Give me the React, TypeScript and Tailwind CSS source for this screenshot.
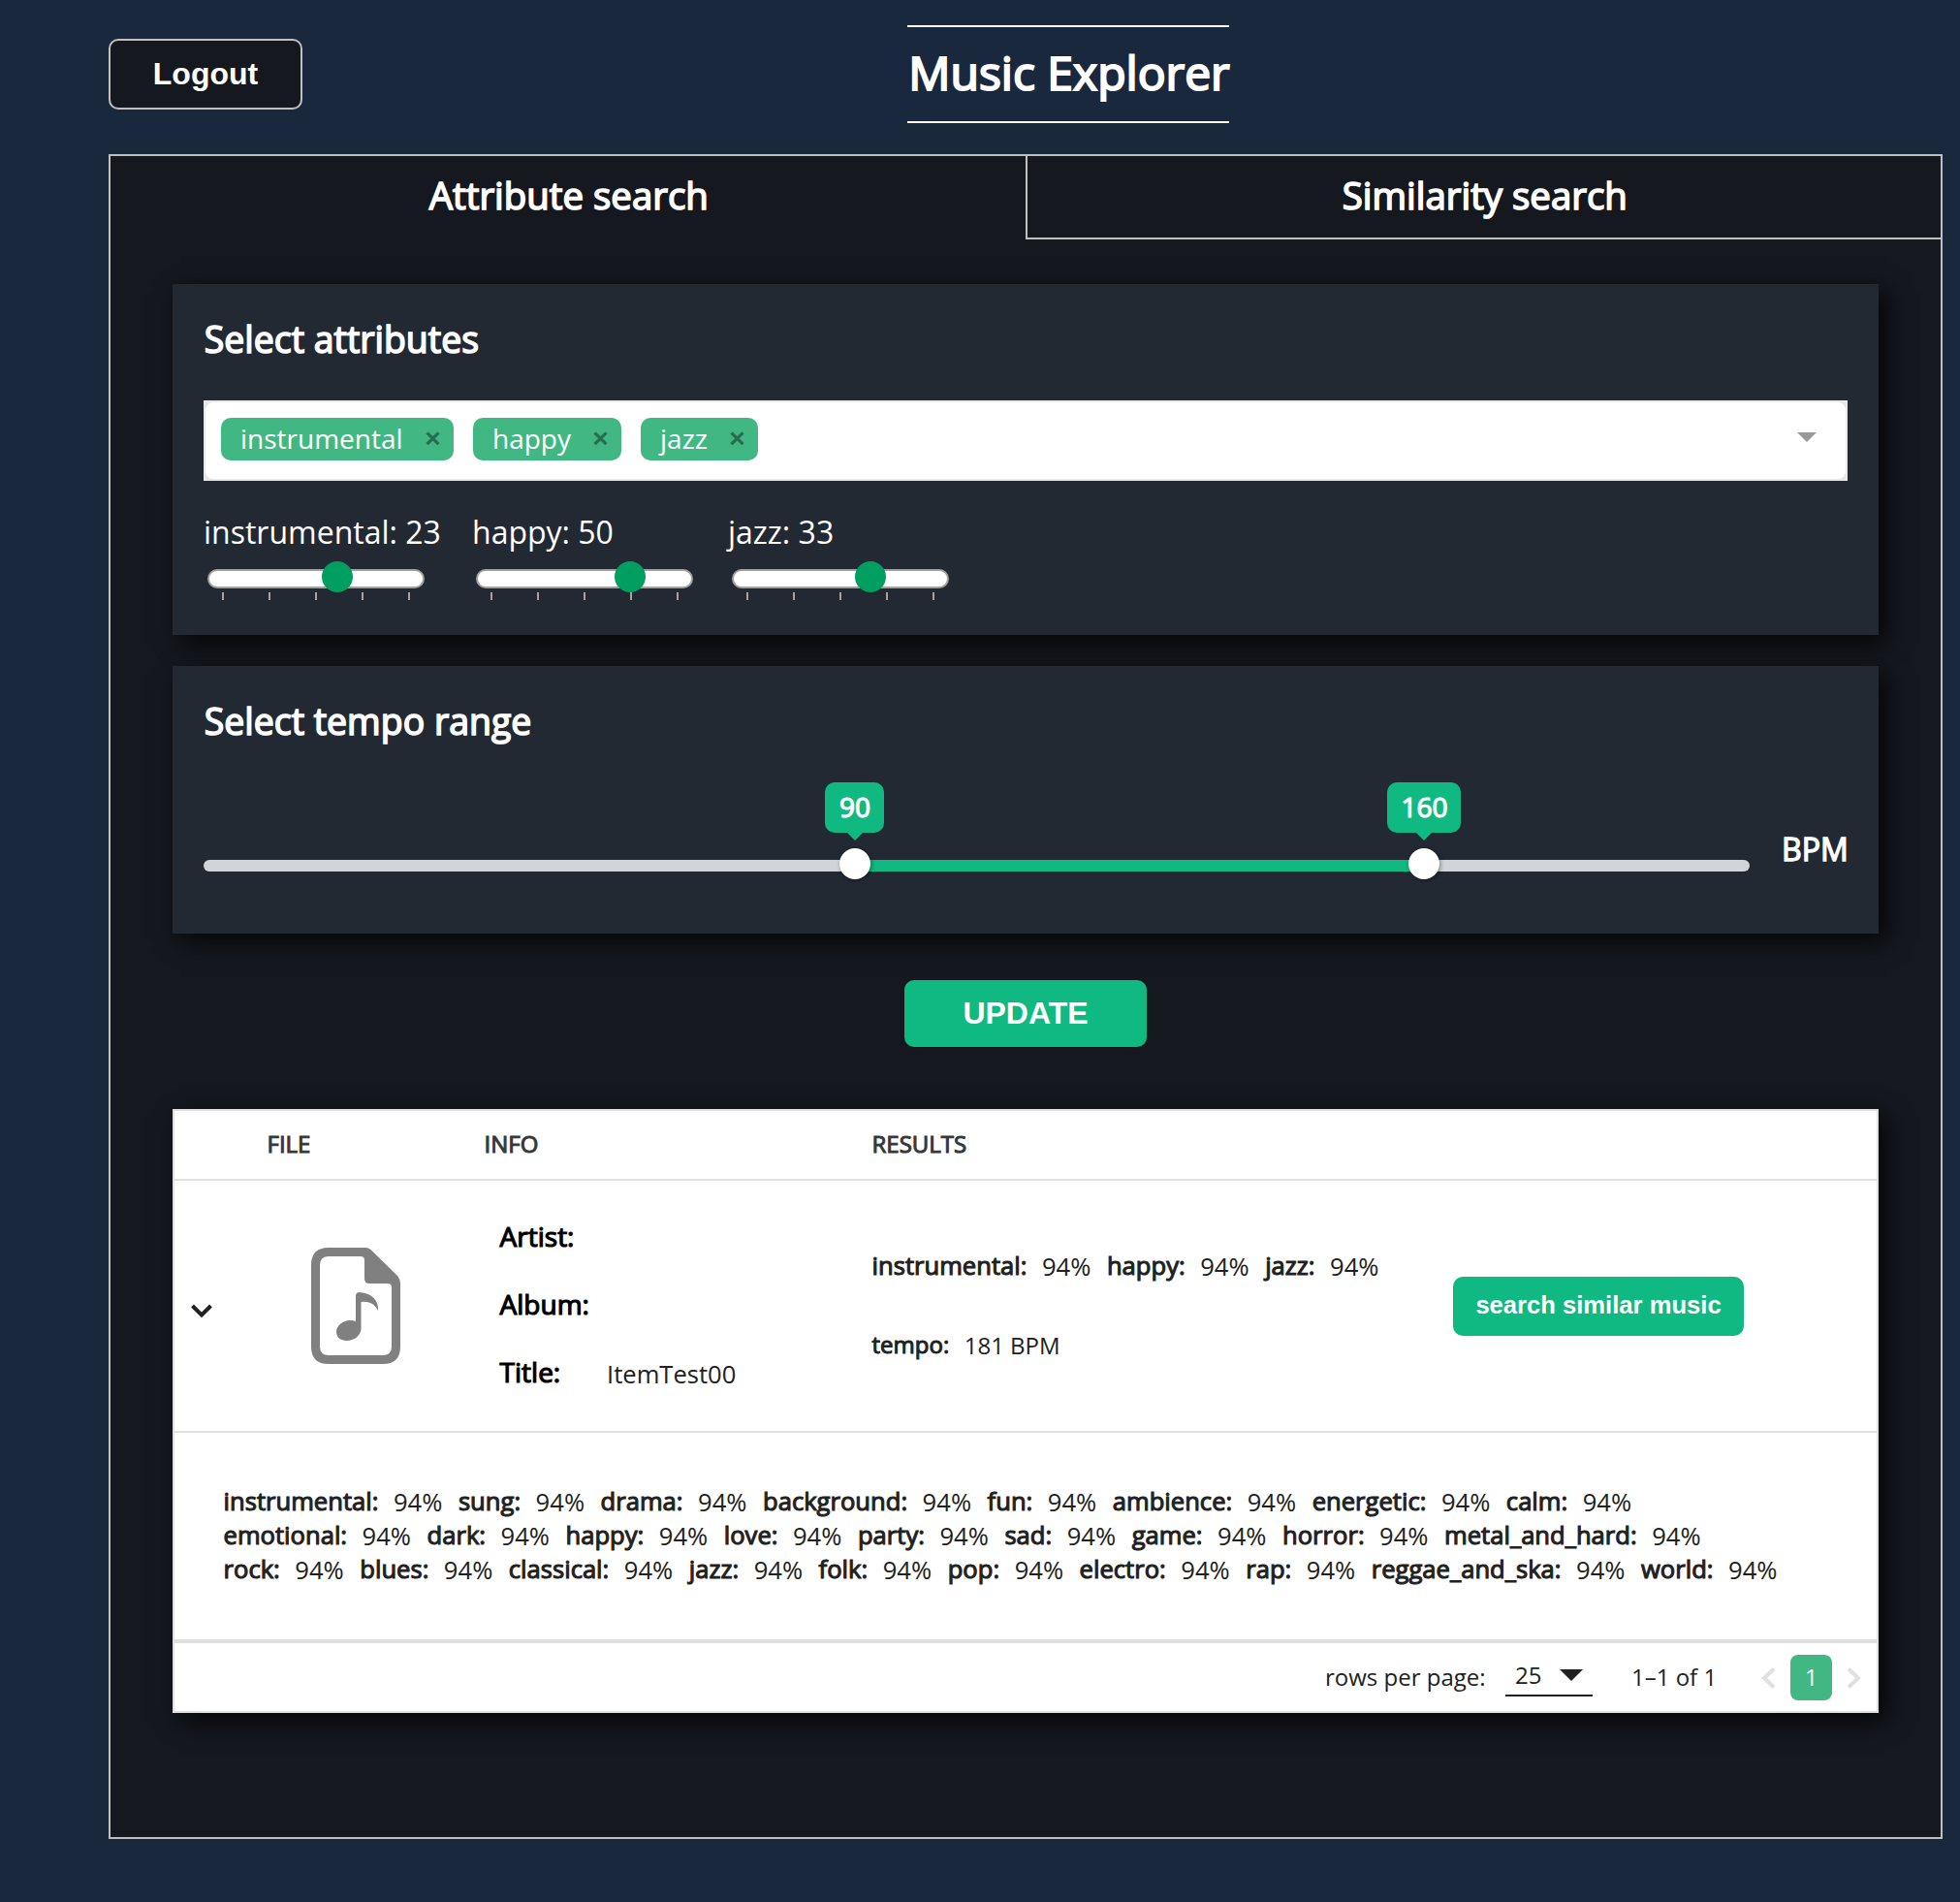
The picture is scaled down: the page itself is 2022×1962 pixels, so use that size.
import React from 'react'

// Regular letterforms thickened with a stroke, nudged so they grow up and to the right.
function Heavy({ children, className = '' }: { children: React.ReactNode; className?: string }) {
  return (
    <span className={`inline-block [-webkit-text-stroke:0.042em_currentColor] [translate:0.021em_-0.021em] ${className}`}>
      {children}
    </span>
  )
}

const attributes = [
  { name: 'instrumental', value: 23, offset: 'left-[118px]', width: 'w-[245px]', chip: 'w-[240px]' },
  { name: 'happy', value: 50, offset: 'left-[143px]', width: 'w-[232px]', chip: 'w-[153px]' },
  { name: 'jazz', value: 33, offset: 'left-[127px]', width: 'w-[232px]', chip: 'w-[121px]' },
]

const details = [
  ['instrumental', 'sung', 'drama', 'background', 'fun', 'ambience', 'energetic', 'calm'],
  ['emotional', 'dark', 'happy', 'love', 'party', 'sad', 'game', 'horror', 'metal_and_hard'],
  ['rock', 'blues', 'classical', 'jazz', 'folk', 'pop', 'electro', 'rap', 'reggae_and_ska', 'world'],
]

function Score({ name, value = '94%' }: { name: string; value?: string }) {
  return (
    <span className="flex gap-4 whitespace-pre">
      <Heavy>{name}:</Heavy>
      <span>{value}</span>
    </span>
  )
}

function Slider({ name, value, offset, width }: { name: string; value: number; offset: string; width: string }) {
  return (
    <div className={`${width}`}>
      <div className="h-[44px] text-[32px] leading-[44px] whitespace-nowrap">
        {name}: {value}
      </div>
      <div className="relative mx-1 mt-[16px] h-5 w-[224px] rounded-[10px] border-2 border-[#a0a0a0] bg-white">
        <div className={`absolute -top-[10px] size-8 rounded-full bg-[#009e60] ${offset} -ml-[2px]`} />
      </div>
      <div className="mt-1 ml-[19px] flex gap-[46px]">
        {[0, 1, 2, 3, 4].map((i) => (
          <div key={i} className="h-2 w-0.5 bg-[#b0a0a2]" />
        ))}
      </div>
    </div>
  )
}

function Handle({ value, place }: { value: number; place: string }) {
  return (
    <div className={`absolute -top-[12px] flex size-8 justify-center rounded-full bg-white shadow-[1px_1px_4px_rgba(0,0,0,0.45)] ${place}`}>
      <div className="absolute -top-[68px] flex h-[52px] items-center rounded-[10px] bg-[#10b981] px-[14px] pb-px text-[28px] leading-[42px] text-white">
        <Heavy>{value}</Heavy>
        <div className="absolute top-[50px] left-1/2 -ml-[10px] border-x-[10px] border-t-[10px] border-x-transparent border-t-[#10b981]" />
      </div>
    </div>
  )
}

function FileIcon() {
  return (
    <svg width="92" height="120" viewBox="0 0 92 120" fill="#808080">
      <path
        fillRule="evenodd"
        d="M18 0H56Q60 0 63 3.500L89 29Q92 32.500 92 37V102Q92 120 74 120H18Q0 120 0 102V18Q0 0 18 0ZM18 9Q9 9 9 18V102Q9 111 18 111H74Q83 111 83 102V41Q83 37 79 37H60Q55 37 55 32V13Q55 9 51 9Z"
      />
      <path d="M46 50Q46 46 50 46C62 47 70 54 69 65C66 59 61 55 51.500 56V84C51 91 44 96 37 96C30 96 26 92 26 87C26 80 33 75 40 75Q44 75 46 76Z" />
    </svg>
  )
}

export default function App() {
  return (
    <div className="h-[1962px] w-[2022px] overflow-hidden bg-[#1a283e] pl-[112px] font-['Open_Sans','Noto_Sans',sans-serif] text-white">
      <header className="flex h-[159px] items-start">
        <button className="mt-[40px] h-[73px] w-[200px] rounded-[10px] border-2 border-[#c0c0c0] bg-[#15181f] pb-[2px] font-['Liberation_Sans',Arial,sans-serif] text-[32px] font-bold">
          Logout
        </button>
        <h1 className="mt-[26px] ml-[624px] h-[101px] w-[332px] border-y-2 border-white text-center text-[48px] leading-[96px] whitespace-nowrap">
          <Heavy>Music Explorer</Heavy>
        </h1>
      </header>

      <main className="h-[1738px] w-[1892px] border-2 border-[#c0c0c0] bg-[#15181f]">
        <nav className="grid h-[86px] grid-cols-2 text-center text-[38.400px] leading-[83px]">
          <div>
            <Heavy>Attribute search</Heavy>
          </div>
          <div className="border-b-2 border-l-2 border-[#c0c0c0]">
            <Heavy>Similarity search</Heavy>
          </div>
        </nav>

        <div className="px-16 pt-[46px]">
          <section className="h-[362px] bg-[#232933] px-8 pt-8 shadow-[8px_8px_24px_rgba(0,0,0,0.8)]">
            <h3 className="h-[52px] text-[37.440px] leading-[52px]">
              <Heavy>Select attributes</Heavy>
            </h3>
            <div className="mt-9 h-[83px] bg-[#e8e8e8]">
              <div className="flex h-full items-start justify-between rounded-[10px] border-2 border-[#e8e8e8] bg-white">
                <div className="flex gap-5 pt-4 pl-4">
                  {attributes.map((a) => (
                    <div key={a.name} className={`flex h-11 justify-between rounded-[10px] bg-[#41b883] pl-5 text-[28px] leading-[42px] ${a.chip}`}>
                      <span>{a.name}</span>
                      <Heavy className="w-11 text-center text-[#266d4d]">×</Heavy>
                    </div>
                  ))}
                </div>
                <div className="mt-[31px] mr-[30px] border-x-[10px] border-t-[10px] border-x-transparent border-t-[#999999]" />
              </div>
            </div>
            <div className="mt-[31px] flex gap-8">
              {attributes.map((a) => (
                <Slider key={a.name} name={a.name} value={a.value} offset={a.offset} width={a.width} />
              ))}
            </div>
          </section>

          <section className="mt-8 h-[276px] bg-[#232933] px-8 pt-8 shadow-[8px_8px_24px_rgba(0,0,0,0.8)]">
            <h3 className="h-[52px] text-[37.440px] leading-[52px]">
              <Heavy>Select tempo range</Heavy>
            </h3>
            <div className="mt-[84px] flex items-start justify-between">
              <div className="relative mt-8 h-3 w-[1595px] rounded-[6px] bg-[#d1d5db]">
                <div className="ml-[671px] h-3 w-[588px] bg-[#10b981]" />
                <Handle value={90} place="left-[655.5px]" />
                <Handle value={160} place="left-[1243px]" />
              </div>
              <div className="text-[32px] leading-[44px]">
                <Heavy>BPM</Heavy>
              </div>
            </div>
          </section>

          <button className="mx-auto mt-12 block h-[69px] w-[250px] rounded-[10px] bg-[#10b981] pb-[2px] font-['Liberation_Sans',Arial,sans-serif] text-[32px] font-bold">
            UPDATE
          </button>

          <section className="mt-16 h-[623px] border-2 border-[#e0e0e0] bg-white text-[25.600px] leading-[35px] text-[#212121] shadow-[8px_8px_24px_rgba(0,0,0,0.8)]">
            <div className="flex h-[72px] border-b-2 border-[#e0e0e0] pl-[95px] text-[24px] leading-[70px] text-[#373737]">
              <div className="w-[224px]">
                <Heavy>FILE</Heavy>
              </div>
              <div className="w-[400px]">
                <Heavy>INFO</Heavy>
              </div>
              <Heavy>RESULTS</Heavy>
            </div>

            <div className="flex h-[260px] border-b-2 border-[#e0e0e0]">
              <div className="w-[141px] pt-[127px] pl-[17px]">
                <svg width="22" height="15" viewBox="0 0 22 15" fill="none" stroke="#212121" strokeWidth="4">
                  <path d="M1.500 2L11 11.500L20.500 2" />
                </svg>
              </div>
              <div className="w-[194px] pt-[69px]">
                <FileIcon />
              </div>
              <div className="flex w-[384px] flex-col gap-8 pt-[39px] text-[28px] leading-[38px] text-black">
                <div>
                  <Heavy>Artist:</Heavy>
                </div>
                <div>
                  <Heavy>Album:</Heavy>
                </div>
                <div className="flex">
                  <Heavy className="w-[111px]">Title:</Heavy>
                  <span className="pt-[2px] text-[25.600px] text-[#212121]">ItemTest00</span>
                </div>
              </div>
              <div className="w-[600px] pt-[71px]">
                <div className="flex gap-4">
                  <Score name="instrumental" />
                  <Score name="happy" />
                  <Score name="jazz" />
                </div>
                <div className="mt-[46px] text-[24px]">
                  <Score name="tempo" value="181 BPM" />
                </div>
              </div>
              <button className="mt-[99px] h-[61px] w-[300px] rounded-[10px] bg-[#10b981] pb-[2px] font-['Liberation_Sans',Arial,sans-serif] text-[25.600px] font-bold text-white">
                search similar music
              </button>
            </div>

            <div className="h-[217px] border-b-4 border-[#e0e0e0] pt-[54px] pl-[50px]">
              {details.map((row) => (
                <div key={row[0]} className="flex gap-4">
                  {row.map((name) => (
                    <Score key={name} name={name} />
                  ))}
                </div>
              ))}
            </div>

            <footer className="flex h-[70px] items-start justify-end pr-4 text-[24px] leading-[70px]">
              <div className="w-[186px]">rows per page:</div>
              <div className="mt-[12px] flex h-[43px] w-[90px] items-center justify-between border-b-2 border-[#212121] pr-[10px] pl-[10px] leading-[41px]">
                <span>25</span>
                <div className="border-x-[12px] border-t-[12px] border-x-transparent border-t-[#212121]" />
              </div>
              <div className="ml-10 w-[134px]">1–1 of 1</div>
              <svg className="mt-[25px]" width="15" height="22" viewBox="0 0 15 22" fill="none" stroke="#e0e0e0" strokeWidth="4">
                <path d="M13 1.500L3 11L13 20.500" />
              </svg>
              <div className="mx-[15px] mt-3 h-[47px] w-[43px] rounded-[8px] bg-[#41b883] text-center leading-[46px] text-white">1</div>
              <svg className="mt-[25px]" width="15" height="22" viewBox="0 0 15 22" fill="none" stroke="#e0e0e0" strokeWidth="4">
                <path d="M2 1.500L12 11L2 20.500" />
              </svg>
            </footer>
          </section>
        </div>
      </main>
    </div>
  )
}
